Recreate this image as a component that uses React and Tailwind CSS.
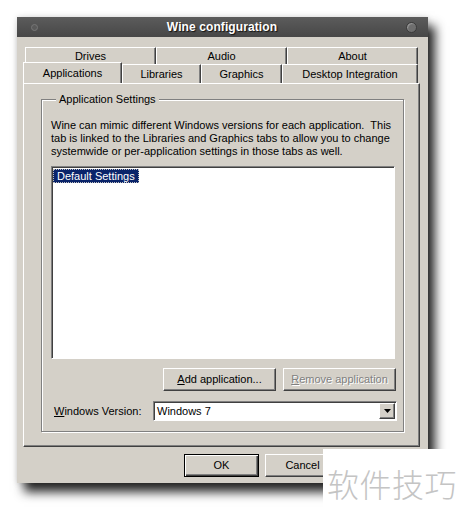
import React from "react";

const font = { fontFamily: '"Liberation Sans", Arial, sans-serif' };

function Tab({ label, w, selected, back }) {
  return (
    <div
      className={
        "flex items-center justify-center border-t border-l border-t-white border-l-white border-r border-r-[#404040] shadow-[inset_-1px_0_0_#808080] bg-[#d4d0c8] " +
        (back ? "h-[17px] " : selected ? "h-[21px] -mt-[2px] -ml-[2px] relative z-10 " : "h-[19px] ")
      }
      style={{ width: w }}
    >
      {label}
    </div>
  );
}

function Button({ children, w, def, disabled }) {
  return (
    <div
      className={
        "h-[23px] flex items-center justify-center bg-[#d4d0c8] " +
        (def
          ? "border border-black shadow-[inset_1px_1px_0_#fff,inset_-1px_-1px_0_#404040,inset_-2px_-2px_0_#808080]"
          : "border-t border-l border-t-white border-l-white border-r border-b border-r-[#404040] border-b-[#404040] shadow-[inset_-1px_-1px_0_#808080]") +
        (disabled ? " text-[#808080] [text-shadow:1px_1px_0_#fff]" : "")
      }
      style={{ width: w }}
    >
      {children}
    </div>
  );
}

export default function App() {
  return (
    <div className="relative w-[461px] h-[517px] bg-white overflow-hidden text-[11px] text-black" style={font}>
      <div className="pt-[17px] pl-[17px]">
        <div className="w-[411px] h-[466px] bg-[#d4d0c8] flex flex-col shadow-[7px_9px_10px_rgba(0,0,0,0.85),0_0_6px_rgba(0,0,0,0.15)]">
          {/* title bar */}
          <div className="h-[20px] bg-gradient-to-b from-[#5c5c5c] to-[#474747] flex items-center justify-between px-[13px]">
            <div className="w-[7px] h-[7px] rounded-full bg-[#5a5a5a] border border-[#777] ml-[1px]" />
            <div className="text-white font-bold text-[12px] [text-shadow:1px_1px_1px_#111] tracking-[0.1px]">Wine configuration</div>
            <div className="w-[11px] h-[11px] rounded-full bg-[#6e6e6e] border border-[#3a3a3a] shadow-[inset_1px_1px_1px_#999] -mr-[2px]" />
          </div>

          <div className="pt-[10px] pl-[6px] pr-[8px] flex flex-col">
            {/* back row */}
            <div className="flex pl-[2px]">
              <Tab back label="Drives" w={131} />
              <Tab back label="Audio" w={131} />
              <Tab back label="About" w={131} />
            </div>
            {/* front row */}
            <div className="flex pl-[2px]">
              <Tab selected label="Applications" w={99} />
              <Tab label="Libraries" w={79} />
              <Tab label="Graphics" w={81} />
              <Tab label="Desktop Integration" w={136} />
            </div>

            {/* pane */}
            <div className="h-[364px] border-t border-l border-t-white border-l-white border-r border-b border-r-[#404040] border-b-[#404040] shadow-[inset_-1px_-1px_0_#808080] pt-[8px] pl-[17px] pr-[15px]">
              <fieldset className="h-[340px] border border-[#808080] shadow-[inset_1px_1px_0_#fff,1px_1px_0_#fff] pl-[9px] pr-[8px] pb-[10px]">
                <legend className="ml-[5px] px-[3px] leading-[14px] bg-[#d4d0c8]">Application Settings</legend>
                <p className="mt-[13px] leading-[13px] whitespace-nowrap">
                  Wine can mimic different Windows versions for each application.&nbsp; This
                  <br />
                  tab is linked to the Libraries and Graphics tabs to allow you to change
                  <br />
                  systemwide or per-application settings in those tabs as well.
                </p>
                <div className="mt-[8px] h-[193px] bg-white border-t border-l border-t-[#808080] border-l-[#808080] border-r border-b border-r-white border-b-white shadow-[inset_1px_1px_0_#404040] pl-[1px] pt-[1px]">
                  <div className="inline-block bg-[#0a246a] text-white px-[4px] leading-[14px] outline-1 outline-dotted outline-[#c0c0c0] -outline-offset-1">
                    Default Settings
                  </div>
                </div>
                <div className="mt-[9px] -mr-[1px] flex justify-end gap-[7px]">
                  <Button w={113}>
                    <span>
                      <span className="underline">A</span>dd application...
                    </span>
                  </Button>
                  <Button w={113} disabled>
                    <span>
                      <span className="underline">R</span>emove application
                    </span>
                  </Button>
                </div>
                <div className="mt-[10px] -mr-[2px] flex items-center">
                  <div className="w-[102px] pl-[3px]">
                    <span className="underline">W</span>indows Version:
                  </div>
                  <div className="flex-1 h-[20px] bg-white border-t border-l border-t-[#808080] border-l-[#808080] border-r border-b border-r-white border-b-white shadow-[inset_1px_1px_0_#404040] flex items-center pl-[3px] pr-[1px]">
                    <span className="flex-1">Windows 7</span>
                    <div className="w-[16px] h-[16px] bg-[#d4d0c8] border-t border-l border-t-white border-l-white border-r border-b border-r-[#404040] border-b-[#404040] shadow-[inset_-1px_-1px_0_#808080] flex items-center justify-center">
                      <svg width="7" height="4" viewBox="0 0 7 4">
                        <path d="M0 0h7L3.5 4z" fill="#000" />
                      </svg>
                    </div>
                  </div>
                </div>
              </fieldset>
            </div>

            {/* bottom buttons */}
            <div className="mt-[7px] flex pl-[161px] gap-[6px]">
              <Button w={75} def>OK</Button>
              <Button w={75}>Cancel</Button>
            </div>
          </div>
        </div>
      </div>

      {/* watermark */}
      <div className="absolute left-[323px] top-[449px] w-[138px] h-[68px] bg-white flex items-center justify-center">
        <span className="text-[32px] text-[#c4c4c4] tracking-[0.5px]" style={{ fontFamily: '"Noto Sans CJK SC", sans-serif', fontWeight: 300 }}>
          软件技巧
        </span>
      </div>
    </div>
  );
}
